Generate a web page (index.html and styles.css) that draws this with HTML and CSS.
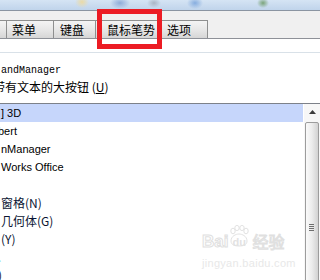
FILE: index.html
```html
<!DOCTYPE html>
<html lang="zh-CN">
<head>
    <meta charset="UTF-8">
    <meta name="viewport" content="width=device-width, initial-scale=1.0">
    <title>自定义 - 鼠标笔势</title>
    <link rel="stylesheet" href="styles.css">
</head>
<body>
    <div class="window">
        <div class="titlebar"></div>
        <div class="tabstrip">
            <div class="tab tab-first"></div>
            <div class="tab tab-menu">菜单</div>
            <div class="tab tab-keys">键盘</div>
            <div class="tab tab-gesture">鼠标笔势</div>
            <div class="tab tab-options">选项</div>
        </div>
        <div class="panel">
            <div class="panel-rule"></div>
            <div class="cmd-name">andManager</div>
            <div class="cmd-check">带有文本的大按钮 (<u>U</u>)</div>
            <div class="listbox">
                <ul class="items">
                    <li class="selected">] 3D</li>
                    <li class="cut">bert</li>
                    <li>nManager</li>
                    <li>Works Office</li>
                    <li></li>
                    <li class="cjk">窗格(N)</li>
                    <li class="cjk">几何体(G)</li>
                    <li class="cjk">(Y)</li>
                    <li class="cjk faint">.</li>
                    <li class="cjk cut">)</li>
                </ul>
                <div class="scrollbar">
                    <div class="scroll-up">
                        <svg width="7" height="4" viewBox="0 0 7 4"><path d="M0 4 L3.5 0 L7 4 Z" fill="#3c3c3c"/></svg>
                    </div>
                    <div class="scroll-thumb">
                        <div class="grip"></div>
                    </div>
                </div>
            </div>
        </div>

        <div class="highlight"></div>

        <div class="watermark">
            <div class="wm-logo">
                <span class="wm-bai">Bai</span>
                <span class="wm-paw">
                    <svg width="22" height="22" viewBox="0 0 22 22">
                        <ellipse cx="5" cy="6" rx="2.2" ry="2.8" fill="none" stroke="#e2e2e2"/>
                        <ellipse cx="9" cy="3" rx="2.2" ry="2.6" fill="none" stroke="#e2e2e2"/>
                        <ellipse cx="14" cy="3" rx="2.2" ry="2.6" fill="none" stroke="#e2e2e2"/>
                        <ellipse cx="18" cy="6" rx="2.2" ry="2.8" fill="none" stroke="#e2e2e2"/>
                        <path d="M3 16 C3 11 8 9 11 9 C14 9 19 11 19 16 C19 20 15 21 11 21 C7 21 3 20 3 16 Z" fill="none" stroke="#e2e2e2"/>
                    </svg>
                    <span class="wm-du">du</span>
                </span>
                <span class="wm-jy">经验</span>
            </div>
            <div class="wm-url">jingyan.baidu.com</div>
        </div>
    </div>
</body>
</html>
```

FILE: styles.css
```css
body {
    margin: 0;
    padding: 0;
    background: #fff;
    font-family: "Noto Sans CJK SC", "Liberation Sans", sans-serif;
}
.window {
    position: relative;
    width: 320px;
    height: 280px;
    overflow: hidden;
    background: #fff;
}
.titlebar {
    height: 10px;
    border-bottom: 1px solid #8b95a2;
    background:
        radial-gradient(ellipse 7px 6px at 82px 2px, #eadaa6, transparent),
        radial-gradient(ellipse 10px 6px at 120px 3px, #8facd8, transparent),
        radial-gradient(ellipse 7px 5px at 154px 3px, #a9b4c4, transparent),
        radial-gradient(ellipse 8px 6px at 195px 3px, #86addf, transparent),
        radial-gradient(ellipse 6px 5px at 263px 3px, #7aa47a, transparent),
        linear-gradient(#d5e4f4, #c0d4eb);
}
.tabstrip {
    height: 27px;
    display: flex;
    align-items: flex-end;
    background: #f0f0f0;
    border-bottom: 1px solid #8e9198;
}
.tab {
    box-sizing: border-box;
    height: 18px;
    border-top: 1px solid #8e8f8f;
    border-right: 1px solid #8e8f8f;
    background: linear-gradient(#f4f4f4, #e6e6e6 55%, #d6d6d6);
    font-size: 12px;
    line-height: 17px;
    color: #000;
    white-space: nowrap;
}
.tab-first { width: 7px; }
.tab-menu { width: 47px; padding-left: 5px; }
.tab-keys { width: 42px; padding-left: 6px; }
.tab-gesture { width: 62px; padding-left: 11px; }
.tab-options { width: 50px; padding-left: 9px; }

.panel {
    padding-top: 13px;
}
.panel-rule {
    height: 1px;
    background: #d9e1e8;
}
.cmd-name {
    margin-top: 10px;
    padding-left: 1px;
    font-family: "Liberation Mono", monospace;
    font-size: 10px;
    line-height: 16px;
    color: #000;
}
.cmd-check {
    margin-left: -7px;
    font-size: 12px;
    line-height: 16px;
    color: #000;
}
.cmd-check u {
    text-decoration: underline;
}
.listbox {
    margin-top: 8px;
    border-top: 1px solid #7d8189;
    display: flex;
    height: 200px;
}
.items {
    list-style: none;
    margin: 0;
    padding: 0;
    width: 304px;
}
.items li {
    height: 18px;
    width: 303px;
    padding-left: 1px;
    box-sizing: border-box;
    font-family: "Liberation Sans", sans-serif;
    font-size: 11px;
    line-height: 18px;
    color: #000;
    white-space: nowrap;
}
.items li.selected {
    background: #c6d6fb;
}
.items li.cut {
    padding-left: 0;
    margin-left: -2px;
}
.items li.cjk {
    font-family: "Noto Sans CJK SC", sans-serif;
    font-size: 12px;
    color: #0b1533;
}
.items li.faint {
    color: #8fe0e8;
    margin-left: -3px;
}
.scrollbar {
    width: 16px;
    background: #f7f7f7;
}
.scroll-up {
    height: 16px;
    display: flex;
    align-items: center;
    justify-content: center;
}
.scroll-thumb {
    margin-top: 2px;
    margin-left: 1px;
    width: 14px;
    height: 200px;
    box-sizing: border-box;
    border: 1px solid #9c9c9c;
    border-radius: 2px;
    background: linear-gradient(90deg, #fafafa, #ececec 50%, #d2d2d2);
    padding-top: 101px;
}
.grip {
    width: 5px;
    height: 7px;
    margin-left: 3px;
    background: repeating-linear-gradient(#6e6e6e 0 1px, transparent 1px 2px);
}

.highlight {
    position: absolute;
    left: 97px;
    top: 9px;
    width: 65px;
    height: 40px;
    box-sizing: border-box;
    border: 5px solid #ec1c24;
}

.watermark {
    position: absolute;
    left: 202px;
    top: 225px;
    color: #e6e6e6;
    font-family: "Liberation Sans", sans-serif;
}
.wm-logo {
    display: flex;
    align-items: flex-end;
    height: 26px;
}
.wm-bai {
    font-size: 17px;
    font-weight: bold;
    line-height: 18px;
    color: #fff;
    -webkit-text-stroke: 1px #e0e0e0;
}
.wm-paw {
    position: relative;
    width: 22px;
    height: 26px;
}
.wm-paw svg {
    position: absolute;
    left: 0;
    top: 0;
}
.wm-du {
    position: absolute;
    left: 4px;
    top: 11px;
    font-size: 11px;
    font-weight: bold;
    color: #e2e2e2;
}
.wm-jy {
    margin-left: 2px;
    font-family: "Noto Sans CJK SC", sans-serif;
    font-size: 16px;
    line-height: 20px;
    color: #fff;
    -webkit-text-stroke: 1px #e0e0e0;
}
.wm-url {
    margin-top: 6px;
    font-size: 11px;
    line-height: 12px;
    color: #e8e8e8;
    letter-spacing: 0.3px;
}
```
